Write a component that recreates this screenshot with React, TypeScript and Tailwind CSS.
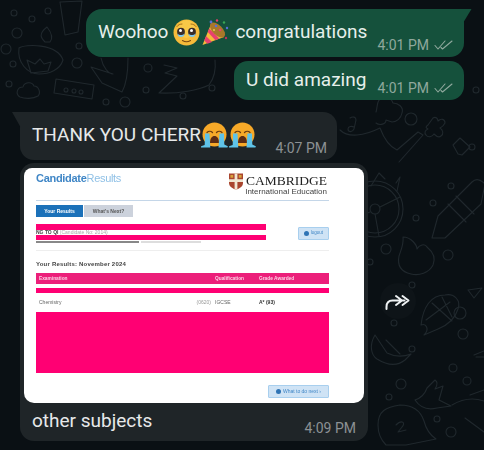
const font = { fontFamily: 'Roboto, sans-serif' };

function Doodles() {
  const circles = [
    [14, 13, 3], [32, 19, 3], [48, 11, 3], [17, 33, 5], [6, 49, 5], [13, 64, 3], [79, 46, 3], [77, 63, 5],
    [9, 84, 3], [148, 68, 4], [146, 90, 3], [106, 102, 3], [125, 102, 5], [183, 96, 3], [212, 88, 3],
    [411, 119, 6], [472, 147, 3], [451, 186, 3], [433, 203, 3], [416, 218, 3], [386, 249, 5], [448, 255, 5],
    [370, 262, 3], [460, 313, 6], [463, 334, 5], [412, 285, 3], [394, 323, 3], [412, 349, 3], [453, 368, 4],
    [467, 381, 4], [401, 384, 5], [389, 397, 3], [437, 419, 3], [451, 432, 5], [476, 90, 3],
  ];
  return (
    <svg className="absolute inset-0" width="484" height="450" viewBox="0 0 484 450" fill="none" stroke="#20282d" strokeWidth="1.1" strokeLinecap="round" strokeLinejoin="round">
      {circles.map(([cx, cy, r], i) => <circle key={i} cx={cx} cy={cy} r={r} />)}
      {/* lamp */}
      <path d="M19 48c6-4 38-5 44 12-3 10-14 14-24 14-12 0-22-12-20-26zM45 42c-4-4-7-8 2-15 4 5 7 10 3 15z" />
      <path d="M27 60l8 4 5-5 4 5 7-2-3 9-17 2z" />
      {/* bottle up top */}
      <path d="M60 2l22-1-4 31-13 3z" />
      {/* cloud */}
      <path d="M20 97c-5-3-3-10 3-10 1-5 9-6 11-1 5 0 7 7 4 10-5 3-13 3-18 1z" />
      {/* radio */}
      <path d="M56 79l38 6-2 14-38-6z" />
      <circle cx="66" cy="90" r="2" /><circle cx="74" cy="91" r="2" /><circle cx="81" cy="92" r="2" />
      {/* plant and carrot */}
      <path d="M101 58c2 10 8 16 12 16l-22-7 11 16 20 9c5-9 6-20 6-34" />
      <path d="M164 65l13 3-12 5 12 3-18 17c20 1 40-3 50-8 6-8 7-16 6-25" />
      {/* flower bit and note */}
      <path d="M350 118c3-2 6-1 6 2l-2 9c-2 4-6 3-6 0s4-3 6-2" />
      <path d="M376 112c2-6 0-14 8-14 4-1 8 1 9 5 5 0 11 4 9 10-1 5-5 9-10 9l-6-2c0 4-6 6-10 3" />
      <path d="M340 130c8 8 24 6 40-2 3 8 8 18 17 22l21-18 5 3-24 27" />
      <path d="M428 125l5-7c3-2 5 1 5 3 3-3 7-2 7 2-1 2-3 4-5 5 3 2 4 6 1 8-2 2-5 0-7-2-2 3-6 4-8 1-2-2-1-5 2-6-2-1-3-2 0-4z" />
      <path d="M453 145l7-7 10 9-8 8-4-1z" />
      {/* wheel */}
      <circle cx="375" cy="209" r="28" /><circle cx="375" cy="209" r="24" /><circle cx="375" cy="209" r="5" />
      <path d="M380 207l20-10M370 212l-20 8M375 214l4 22" />
      <path d="M385 179l-6-6-8 13M396 183l4-6-3 14" />
      {/* pencil */}
      <path d="M432 238l6-22 34-34c4-4 9-2 13 2l-4 20-36 34zM448 204l18 18M456 196l18 18" />
      {/* flame */}
      <path d="M403 237c8 0 14 8 14 12 2-4 8-6 10-2 6 5 9 11 6 18-4 8-14 11-22 9-9-2-14-8-12-18 2-6 5-12 4-19z" />
      {/* corn */}
      <path d="M421 325c2-18 10-30 24-30 10-2 16 6 13 14-3 10-10 16-20 20l-14 6c6-6 2-12-3-10zM432 303l20 18M442 297l10 20M426 320l24-18" />
      {/* hands */}
      <path d="M375 335l12 18c8 4 16 4 24 1l-6 6c-10 8-20 4-28-1-6-4-8-14-2-24zM386 340l14 14" />
      <path d="M415 400c6-2 10-6 12-12l8-8c3 2 2 6 0 9l8-3-4 14 12 6-14 2c-8 2-16 1-22-8z" />
      {/* bubble bottom */}
      <path d="M378 425c0-14 8-18 22-20 10 0 20 4 24 16 2 8 6 14 12 18l-30 6h-20c-6-6-8-12-8-20z" />
      <path d="M396 425c6-6 10-2 6 2l-4 5 8-2" />
      <path d="M470 395l14-5M452 405c10-6 20-8 32-4M465 418l19 14" />
      {/* right edge triangle */}
      <path d="M468 290l14-2-8 10z" />
      <path d="M476 357h8M474 355l10-4" />
    </svg>
  );
}

function DoubleTick() {
  return (
    <svg className="shrink-0" width="19" height="10" viewBox="0 0 19 10" fill="none" stroke="#8fa89d" strokeWidth="1.1" strokeLinecap="round" strokeLinejoin="round">
      <path d="M1 5.500l3 3.500L11 1M7 7.500L8.500 9 18 1" />
    </svg>
  );
}

function PleadingEmoji() {
  return (
    <svg width="27" height="27" viewBox="0 0 27 27">
      <circle cx="13.500" cy="13.500" r="13" fill="#f6bb3a" />
      <circle cx="13.500" cy="10" r="9" fill="#fbd050" opacity="0.6" />
      <ellipse cx="8" cy="13" rx="3.900" ry="4.200" fill="#3a2c28" />
      <ellipse cx="19" cy="13" rx="3.900" ry="4.200" fill="#3a2c28" />
      <circle cx="7.500" cy="11.500" r="1.500" fill="#ffffff" /><circle cx="18.500" cy="11.500" r="1.500" fill="#ffffff" />
      <path d="M4.400 14.500c2 2 5 2 7.200 0-.2 2.500-1.700 3.500-3.600 3.500s-3.400-1-3.600-3.500zM15.400 14.500c2 2 5 2 7.200 0-.2 2.500-1.700 3.500-3.600 3.500s-3.400-1-3.600-3.500z" fill="#7ec9ee" />
      <path d="M9.500 21.500c2.500 1.600 5.500 1.600 8 0" fill="none" stroke="#7a4a12" strokeWidth="1.100" strokeLinecap="round" />
      <path d="M4 7.500c1-1.500 3-2.500 5-2.500M23 7.500c-1-1.500-3-2.500-5-2.500" fill="none" stroke="#a8701a" strokeWidth="1" strokeLinecap="round" />
    </svg>
  );
}

function PartyEmoji() {
  return (
    <svg width="27" height="27" viewBox="0 0 27 27">
      <path d="M0.500 26L9 5l13 13z" fill="#f6b93b" />
      <path d="M4 17l6 6-4.500 1.800-3.200-3.200zM7.200 9.500l10 10-3.800 1.700L5.800 13z" fill="#e8416f" />
      <ellipse cx="15.500" cy="11" rx="5" ry="9.500" transform="rotate(-45 15.500 11)" fill="#a9772a" />
      <circle cx="9" cy="3" r="1.400" fill="#5a6fd8" /><circle cx="15" cy="1.500" r="1.200" fill="#e8416f" />
      <circle cx="22" cy="3.500" r="1.200" fill="#3aa655" /><circle cx="25" cy="9" r="1.200" fill="#5a6fd8" />
      <circle cx="24" cy="19" r="1.200" fill="#c0305a" /><circle cx="14" cy="7" r="1.300" fill="#5a6fd8" />
      <circle cx="18" cy="11" r="1.300" fill="#e8416f" /><circle cx="12" cy="11" r="1" fill="#e8d04a" />
    </svg>
  );
}

function CryingEmoji() {
  return (
    <svg className="shrink-0" width="27" height="27" viewBox="0 0 27 27">
      <circle cx="13.500" cy="12.500" r="12" fill="#f7a928" />
      <path d="M6 10.500c1.500-1.500 4-1.500 5.500 0M15.500 10.500c1.500-1.500 4-1.500 5.500 0" fill="none" stroke="#6b3c10" strokeWidth="1.300" strokeLinecap="round" />
      <path d="M9 21c0-4.500 2-7 4.500-7s4.500 2.500 4.500 7z" fill="#5c2c14" />
      <path d="M4 11.500h4.500l.8 14H.5c-1 0-1-1 .2-1.500l3-1zM18.500 11.500H23l.3 11 3 1.500c1 .5.800 1.500-.3 1.500h-8.500z" fill="#5fc3e8" />
    </svg>
  );
}

function Shield() {
  return (
    <svg className="shrink-0" width="14" height="17" viewBox="0 0 15 17">
      <path d="M0 0h15v10c0 4-4 6-7.500 7C4 16 0 14 0 10z" fill="#a9452f" />
      <path d="M6 0h3v17H6zM0 6h15v3H0z" fill="#f1e6d2" />
      <rect x="1.500" y="1.500" width="3" height="3" fill="#d8a23a" />
      <rect x="10.500" y="1.500" width="3" height="3" fill="#d8a23a" />
    </svg>
  );
}

function ResultsShot() {
  return (
    <div className="h-[235px] w-[340px] overflow-hidden rounded-t-[8px] rounded-b-[10px] bg-white">
      <div className="h-full pr-[35px] pl-3 text-[#333] blur-[0.35px]" style={{ fontFamily: 'Liberation Sans, sans-serif' }}>
        <div className="flex h-[33px] items-start justify-between border-b border-[#c4d6e8]">
          <div className="mt-[3px] text-[11px] leading-[14px] font-bold tracking-[-0.3px] text-[#3f86c6]">
            Candidate<span className="font-normal text-[#8fc0e6]">Results</span>
          </div>
          <div className="mt-[5px] flex flex-col items-end pr-[2px]">
            <div className="flex items-start gap-[3px]">
              <Shield />
              <span className="text-[13.500px] leading-[15px] text-[#222]" style={{ fontFamily: 'Liberation Serif, serif' }}>CAMBRIDGE</span>
            </div>
            <span className="mt-[-3px] text-[8px] leading-[9px] text-[#444]">International Education</span>
          </div>
        </div>
        <div className="mt-[4px] flex h-[12px] gap-[1px] text-[5px] leading-[12px] font-bold">
          <div className="w-[47px] bg-[#1b71b9] text-center text-white">Your Results</div>
          <div className="w-[49px] bg-[#ccd2dc] text-center text-[#555]">What's Next?</div>
        </div>
        <div className="mt-[7px] flex items-start justify-between border-b border-[#eee] pb-[7px]">
          <div className="flex w-[230px] flex-col">
            <div className="h-[5.500px] bg-[#ff0073]" />
            <div className="h-[5px] text-[5px] leading-[5px] font-bold whitespace-nowrap text-[#444]">
              NG TO QI <span className="font-normal text-[#aaa]">(Candidate No: 2014)</span>
            </div>
            <div className="h-[5.500px] bg-[#ff0073]" />
            {/* what is left showing under the second redaction bar */}
            <div className="mt-[1px] flex h-[2px] gap-[2px]">
              <div className="w-[103px] bg-[#888]" />
              <div className="w-[60px] bg-[#ddd]" />
            </div>
          </div>
          <div className="mt-[3px] flex h-[13px] w-[31px] items-center justify-center gap-[2px] rounded-[1px] border border-[#a8cfee] bg-[#cfe3f5] text-[4.500px] text-[#3f86c6]">
            <span className="h-[5px] w-[5px] rounded-full bg-[#2f74b5]" />
            logout
          </div>
        </div>
        <div className="mt-[9px] text-[6px] leading-[8px] font-bold tracking-[0.2px] text-[#444]">Your Results: November 2024</div>
        <div className="mt-[5px] grid h-[11px] grid-cols-[176px_44px_1fr] bg-[#ec1f7a] pl-[3px] text-[4.800px] leading-[11px] font-bold text-[#fbd3e5]">
          <span>Examination</span><span>Qualification</span><span>Grade Awarded</span>
        </div>
        <div className="mt-[4px] h-[5px] bg-[#ff0073]" />
        <div className="grid h-[19px] grid-cols-[176px_44px_1fr] items-center pl-[3px] text-[5px] text-[#666]">
          <span className="flex justify-between pr-[4px]"><span>Chemistry</span><span className="text-[#999]">(0620)</span></span>
          <span>IGCSE</span>
          <span className="font-bold text-[#333]">A* (93)</span>
        </div>
        <div className="h-[61px] bg-[#ff0073]" />
        <div className="mt-[12px] flex justify-end">
          <div className="flex h-[13px] w-[61px] items-center justify-center gap-[2px] rounded-[1px] border border-[#a8cfee] bg-[#cfe3f5] text-[5px] text-[#3f86c6]">
            <span className="h-[5px] w-[5px] rounded-full bg-[#2f74b5]" />
            What to do next ›
          </div>
        </div>
      </div>
    </div>
  );
}

export default function App() {
  return (
    <div className="relative flex h-[450px] w-[484px] flex-col overflow-hidden bg-[#0a1014] pt-[9px]" style={font}>
      <Doodles />

      {/* outgoing */}
      <div className="relative ml-[86px] flex h-[48px] w-[378px] justify-between rounded-l-[16px] rounded-r-[14px] rounded-tr-none bg-[#15513c] pr-[11px] pl-3 text-[#e6efeb]">
        <svg className="absolute top-0 -right-2" width="9" height="14" viewBox="0 0 9 14"><path d="M0 0h8.500L0 14z" fill="#15513c" /></svg>
        <div className="mt-[9px] flex h-[28px] items-center text-[19px] whitespace-nowrap">
          Woohoo
          <span className="ml-[5px]"><PleadingEmoji /></span>
          <span className="mr-[6px] ml-[2px]"><PartyEmoji /></span>
          congratulations
        </div>
        <div className="mt-[28px] flex h-[16px] items-center gap-[5px] text-[14px] whitespace-nowrap text-[#8fa89d]">4:01 PM <DoubleTick /></div>
      </div>
      <div className="relative mt-[4px] ml-[234px] flex h-[39px] w-[230px] justify-between rounded-[14px] bg-[#15513c] pr-[11px] pl-3 text-[#e6efeb]">
        <div className="mt-[5px] h-[28px] text-[19px] leading-[28px] whitespace-nowrap">U did amazing</div>
        <div className="mt-[19px] flex h-[16px] items-center gap-[5px] text-[14px] whitespace-nowrap text-[#8fa89d]">4:01 PM <DoubleTick /></div>
      </div>

      {/* incoming */}
      <div className="relative mt-[12px] ml-[20px] flex h-[48px] w-[317px] justify-between rounded-r-[14px] rounded-bl-[14px] bg-[#1f2528] pr-[10px] pl-3 text-[#e7e9ea]">
        <svg className="absolute top-0 -left-2" width="9" height="16" viewBox="0 0 9 16"><path d="M9 0H0l9 16z" fill="#1f2528" /></svg>
        <div className="mt-[9px] flex h-[28px] items-center text-[19px] whitespace-nowrap">
          THANK YOU CHERR
          <CryingEmoji />
          <span className="ml-[1px]"><CryingEmoji /></span>
        </div>
        <div className="mt-[28px] h-[16px] text-[14px] leading-[16px] whitespace-nowrap text-[#8c9194]">4:07 PM</div>
      </div>

      <div className="relative mt-[3px] flex items-center">
        <div className="ml-[20px] w-[348px] rounded-[14px] bg-[#1f2528] px-1 pt-[5px] text-[#e7e9ea]">
          <ResultsShot />
          <div className="flex h-[38px] justify-between pr-2 pl-2">
            <div className="mt-[4px] h-[28px] text-[19px] leading-[28px] whitespace-nowrap">other subjects</div>
            <div className="mt-[17px] h-[16px] text-[14px] leading-[16px] whitespace-nowrap text-[#8c9194]">4:09 PM</div>
          </div>
        </div>
        <div className="mt-[-2px] ml-[12px] flex h-[36px] w-[36px] items-center justify-center rounded-full bg-[#0e1418]">
          <svg width="26" height="18" viewBox="0 0 26 18" fill="none" stroke="#eef1f2" strokeWidth="2" strokeLinecap="round" strokeLinejoin="round">
            <path d="M1.500 17v-2c0-4 2-6.500 6-6.500h12M11 4l6 4.500-6 4.500M17.500 4l6 4.500-6 4.500" />
          </svg>
        </div>
      </div>
    </div>
  );
}
